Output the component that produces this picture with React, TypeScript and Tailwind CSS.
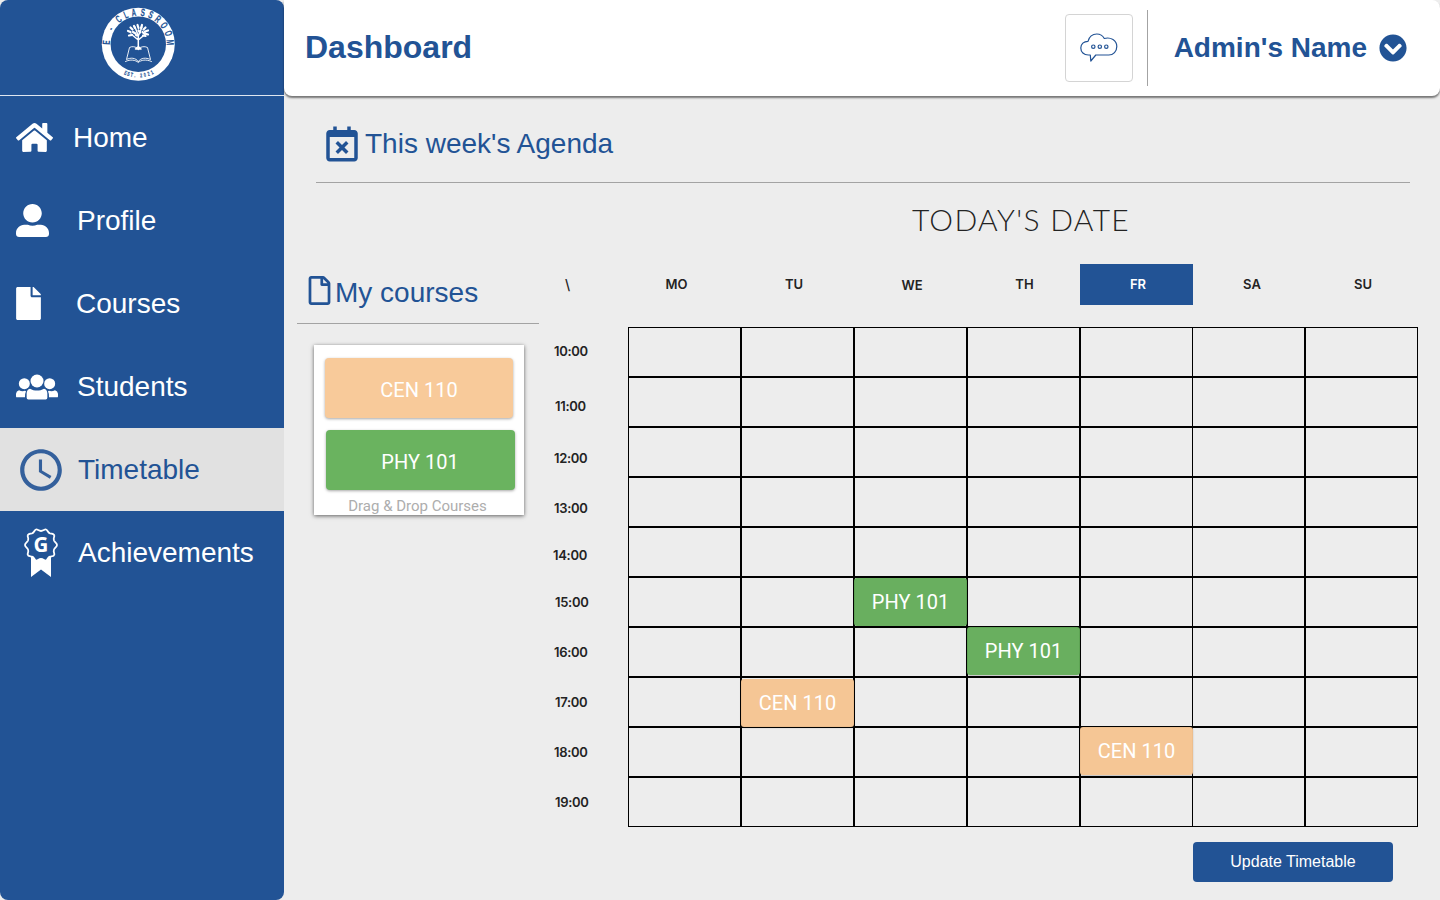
import React from "react";
import { FaHome, FaUserAlt, FaFile, FaRegFile, FaChevronCircleDown } from "react-icons/fa";
import { MdAccessTime } from "react-icons/md";
import { BiCalendarX } from "react-icons/bi";

const ringTop = [
  { char: "E", angle: -87 },
  { char: "-", angle: -61 },
  { char: "C", angle: -38 },
  { char: "L", angle: -23 },
  { char: "A", angle: -8 },
  { char: "S", angle: 8 },
  { char: "S", angle: 23 },
  { char: "R", angle: 38 },
  { char: "O", angle: 54 },
  { char: "O", angle: 70 },
  { char: "M", angle: 87 },
];

const ringBottom = [
  { char: "E", angle: 24 },
  { char: "S", angle: 18 },
  { char: "T", angle: 12 },
  { char: ".", angle: 6 },
  { char: "2", angle: -5 },
  { char: "0", angle: -12 },
  { char: "2", angle: -19 },
  { char: "1", angle: -26 },
];

function Logo() {
  return (
    <svg width="74" height="74" viewBox="0 0 74 74" className="block">
      <circle cx="37.300" cy="37.200" r="36.500" fill="#fff" />
      <circle cx="37.300" cy="37.200" r="27.700" fill="#225395" />
      <g fill="#225395" stroke="#225395" strokeWidth="0.200" fontWeight="700" textAnchor="middle" fontFamily="'Liberation Sans', sans-serif">
        {ringTop.map((item, i) => (
          <text key={i} fontSize="10.500" transform={`rotate(${item.angle} 37.300 37.200) translate(37.300 8.800) scale(0.6 1)`}>
            {item.char}
          </text>
        ))}
        {ringBottom.map((item, i) => (
          <text key={i} fontSize="5.800" transform={`rotate(${item.angle} 37.300 37.200) translate(37.300 70.500) scale(0.62 1)`}>
            {item.char}
          </text>
        ))}
      </g>
      <g fill="none" stroke="#fff" strokeLinecap="round" strokeLinejoin="round">
        <path d="M37.300 42.500 V29 M37.300 33 L30 27 M37.300 33 L44.500 27 M37.300 29 L34 20 M37.300 29 L41 20 M34.500 42 L37.300 39.500 L40 42 Z" strokeWidth="1.500" />
        <path d="M27 24 l2.500 1 M29.500 20.500 l2 2 M33 19 l1 2 M36.500 18 l1 3 M41 18 l-1 3 M44.500 20.500 l-2 2 M47 23.500 l-3 1 M47 27.500 l-3 -1 M31 28 l-3 .5 M42 28.500 l2.500 .5 M32 25 l2.500 1.500 M37.500 23.500 l1.500 2 M41.500 25 l1 1 M35 28 l1 .5" strokeWidth="2.200" />
        <path d="M37.300 54.500 C34.500 50.500 29.500 50.500 25.500 52.500 L28.500 40.500 C31 39 34.500 39.500 36.800 41.500 M37.300 54.500 C40 50.500 45 50.500 49.500 52.500 L46.500 40.500 C43.500 39 40 39.500 37.800 41.500" strokeWidth="0.900" />
        <path d="M24.500 54.500 C29.500 52 34.500 53 37.300 55.500 C40 53 45 52 50.500 54.500" strokeWidth="0.900" />
      </g>
    </svg>
  );
}

function StudentsIcon() {
  return (
    <svg width="42" height="26" viewBox="0 0 126 77" fill="#fff">
      <circle cx="63" cy="20.500" r="19.500" />
      <path d="M42 43.500 C55 51 71 51 84 43.500 C90 45 94 50 94 57 V71 Q94 76 89 76 H37 Q32 76 32 71 V57 C32 50 36 45 42 43.500Z" />
      <circle cx="25" cy="28.500" r="16.500" />
      <circle cx="101" cy="28.500" r="16.500" />
      <path d="M9 48 Q18 53 27 50 L30 51 Q27 56 27 69.500 H3 Q0 69.500 0 66 V59 Q1 50 9 48Z" />
      <path d="M117 48 Q108 53 99 50 L96 51 Q99 56 99 69.500 H123 Q126 69.500 126 66 V59 Q125 50 117 48Z" />
    </svg>
  );
}

function AwardIcon() {
  return (
    <svg width="34" height="50" viewBox="0 0 34 50">
      <path d="M7 28 H27 V49 L17 41.500 L7 49Z" fill="#fff" />
      <path
        d="M17 3 C19.500 3 20.500 1 22 1.500 C24 2.200 23.500 4.700 26 5.300 C28.500 5.800 30 5.500 30.300 7.500 C30.600 9.200 29 10 30 12.500 C31 14.700 33 15 33 17 C33 19 31 19.300 30 21.500 C29 24 30.600 25 30.300 26.700 C30 28.500 28.500 28.200 26 28.700 C23.500 29.300 24 31.800 22 32.500 C20.500 33 19.500 31 17 31 C14.500 31 13.500 33 12 32.500 C10 31.800 10.500 29.300 8 28.700 C5.500 28.200 4 28.500 3.700 26.700 C3.400 25 5 24 4 21.500 C3 19.300 1 19 1 17 C1 15 3 14.700 4 12.500 C5 10 3.400 9.200 3.700 7.500 C4 5.500 5.500 5.800 8 5.300 C10.500 4.700 10 2.200 12 1.500 C13.500 1 14.500 3 17 3Z"
        fill="#225395"
        stroke="#fff"
        strokeWidth="1.800"
      />
      <text x="17" y="24" textAnchor="middle" fill="#fff" fontSize="20.500" fontWeight="700" fontFamily="'Open Sans', sans-serif">G</text>
    </svg>
  );
}

function ChatIcon() {
  return (
    <svg width="38" height="30" viewBox="0 0 38 30" fill="none" stroke="#225395" strokeWidth="1.200" strokeLinejoin="round">
      <path d="M10.300 22 H8.300 C3.800 22 .8 19 .8 15 C.8 11 3.800 8.300 8 8.300 C9.300 3.500 12.800 1 16.800 1 C20.300 1 22.800 2.800 24.300 5.500 C30.800 3.700 36.800 7.500 36.800 13.500 C36.800 18.500 33.300 22 28.800 22 H15.800 L10.800 28 Z" />
      <circle cx="13.300" cy="13.700" r="1.700" />
      <circle cx="19.800" cy="13.700" r="1.700" />
      <circle cx="26.300" cy="13.700" r="1.700" />
    </svg>
  );
}

const navItems = [
  { label: "Home", icon: <FaHome size={37} />, pad: "pl-4", width: "w-[73px]" },
  { label: "Profile", icon: <FaUserAlt size={33} />, pad: "pl-4", width: "w-[77px]" },
  { label: "Courses", icon: <FaFile size={33} />, pad: "pl-3", width: "w-[76px]" },
  { label: "Students", icon: <StudentsIcon />, pad: "pl-4", width: "w-[77px]" },
  { label: "Timetable", icon: <MdAccessTime size={50} className="opacity-90" />, pad: "pl-4", width: "w-[78px]", active: true },
  { label: "Achievements", icon: <AwardIcon />, pad: "pl-6", width: "w-[78px]" },
];

const days = [
  { label: "MO", style: "pr-4" },
  { label: "TU", style: "pr-[7px]" },
  { label: "WE", style: "pl-[3px] pt-0.5" },
  { label: "TH", style: "pl-0.5" },
  { label: "FR", style: "bg-[#225395] pl-[3px] text-white" },
  { label: "SA", style: "-ml-px pl-[7px]" },
  { label: "SU", style: "pl-[3px]" },
];

const hours = [
  { label: "10:00", style: "pl-[15px]" },
  { label: "11:00", style: "mt-[35px] pl-4" },
  { label: "12:00", style: "mt-8 pl-[15px]" },
  { label: "13:00", style: "mt-[30px] pl-[15px]" },
  { label: "14:00", style: "mt-[27px] pl-3.5" },
  { label: "15:00", style: "mt-[27px] pl-4" },
  { label: "16:00", style: "mt-[30px] pl-[15px]" },
  { label: "17:00", style: "mt-[30px] pl-4" },
  { label: "18:00", style: "mt-[30px] pl-[15px]" },
  { label: "19:00", style: "mt-[30px] pl-4" },
];

type Entry = { row: number; col: number; label: string; style: string };

const entries: Entry[] = [
  { row: 5, col: 2, label: "PHY 101", style: "top-0 bg-[#62ac57]/95" },
  { row: 6, col: 3, label: "PHY 101", style: "-top-px bg-[#62ac57]/95" },
  { row: 7, col: 1, label: "CEN 110", style: "top-px bg-[#f5c492]/97" },
  { row: 8, col: 4, label: "CEN 110", style: "-top-px bg-[#f5c492]/97" },
];

function Sidebar() {
  return (
    <aside className="flex w-[284px] shrink-0 flex-col rounded-lg bg-[#225395]">
      <div className="flex h-24 justify-center border-b border-[#dfe6f0] pt-[7px] pr-2">
        <Logo />
      </div>
      <nav>
        {navItems.map((item) => (
          <a
            key={item.label}
            className={`flex h-[83px] items-center text-[28px] ${item.active ? "bg-[#e1e1e1] text-[#225395]" : "text-white"}`}
          >
            <span className={`shrink-0 ${item.width} ${item.pad}`}>{item.icon}</span>
            <span>{item.label}</span>
          </a>
        ))}
      </nav>
    </aside>
  );
}

function Header() {
  return (
    <header className="flex h-24 shrink-0 items-center rounded-b-lg rounded-tr-lg bg-white pl-[21px] pr-[33px] font-bold text-[#225395] shadow-[0_2px_2px_rgba(0,0,0,0.5)]">
      <h1 className="flex-1 pb-0.5 text-[32px]">Dashboard</h1>
      <button className="flex size-[68px] items-center justify-center rounded-[4px] border border-[#d4d4d4]">
        <ChatIcon />
      </button>
      <div className="ml-3.5 h-[76px] w-px bg-[#a3a3a3]" />
      <span className="pl-[26px] text-[28px]">Admin's Name</span>
      <FaChevronCircleDown size={28} className="ml-3" />
    </header>
  );
}

function CoursePanel() {
  return (
    <section className="w-[242px]">
      <h2 className="flex h-[60px] border-b border-[#a3a3a3] pl-[11px] pt-3 text-[28px] leading-8 text-[#225395]">
        <FaRegFile size={29} className="-ml-[3.500px]" />
        <span className="ml-[1.500px] pt-px">My courses</span>
      </h2>
      <div className="ml-[17px] mt-[21px] h-[170px] w-[210px] bg-white pt-[13px] shadow-[0_1px_4px_rgba(0,0,0,0.6)] [font-family:Roboto,sans-serif]">
        <div className="ml-[11px] flex h-[60px] w-[188px] items-center justify-center rounded-[4px] bg-[#f8ca9a] pt-1 text-xl text-white shadow-[0_1px_3px_rgba(0,0,0,0.35)]">CEN 110</div>
        <div className="ml-3 mt-3 flex h-[60px] w-[189px] items-center justify-center rounded-[4px] bg-[#6ab35f] pt-1 pr-px text-xl text-white shadow-[0_1px_3px_rgba(0,0,0,0.35)]">PHY 101</div>
        <p className="pt-1.5 pr-[3px] text-center text-[15px] leading-5 text-[#adadad]">Drag &amp; Drop Courses</p>
      </div>
    </section>
  );
}

function Timetable() {
  return (
    <section className="flex">
      <div className="w-[89px] text-[13px] font-semibold leading-5 [font-family:Inter,sans-serif]">
        <div className="flex h-[41px] items-center pl-[26px] text-sm font-medium">\</div>
        <div className="pt-9 tracking-[-0.3px]">
          {hours.map((hour) => (
            <div key={hour.label} className={`h-5 ${hour.style}`}>{hour.label}</div>
          ))}
        </div>
      </div>
      <div className="w-[790px]">
        <div className="flex h-[41px] text-[13px] font-semibold [font-family:Inter,sans-serif]">
          {days.map((day) => (
            <div key={day.label} className={`flex w-[113px] shrink-0 items-center justify-center ${day.style}`}>{day.label}</div>
          ))}
        </div>
        <div className="mt-[22px]">
          {hours.map((hour, row) => (
            <div key={hour.label} className="flex h-[50px]">
              {days.map((day, col) => {
                const entry = entries.find((e) => e.row === row && e.col === col);
                return (
                  <div key={day.label} className={`relative w-[113px] shrink-0 border border-black ${col === 5 ? "-ml-px" : ""}`}>
                    {entry && (
                      <div className={`absolute -left-px z-10 flex h-12 w-[113px] items-center justify-center rounded-[3px] text-xl text-white shadow-[0_1px_2px_rgba(0,0,0,0.2)] [font-family:Roboto,sans-serif] ${entry.style}`}>
                        {entry.label}
                      </div>
                    )}
                  </div>
                );
              })}
            </div>
          ))}
        </div>
        <button className="ml-[565px] mt-[15px] h-10 w-[200px] rounded-[4px] bg-[#225395] text-base text-white">Update Timetable</button>
      </div>
    </section>
  );
}

export default function App() {
  return (
    <div className="flex h-[900px] w-[1440px] overflow-hidden bg-[#ededed] text-[#232323] [font-family:'Liberation_Sans',Arial,sans-serif]">
      <Sidebar />
      <main className="flex min-w-0 flex-1 flex-col">
        <Header />
        <div className="ml-8 mr-[30px] flex h-[87px] items-start border-b border-[#a3a3a3] pt-[27px] text-[#225395]">
          <BiCalendarX size={42} className="ml-[5px]" />
          <h2 className="ml-0.5 text-[28px] leading-[42px]">This week's Agenda</h2>
        </div>
        <div className="flex h-[72px] justify-center pl-[318px] pt-4 text-[30px] font-light leading-10 tracking-[1.3px] [font-family:Lato,sans-serif]">
          <span>TODAY'S DATE</span>
        </div>
        <div className="flex pl-[13px] pt-[9px]">
          <CoursePanel />
          <Timetable />
        </div>
      </main>
    </div>
  );
}
